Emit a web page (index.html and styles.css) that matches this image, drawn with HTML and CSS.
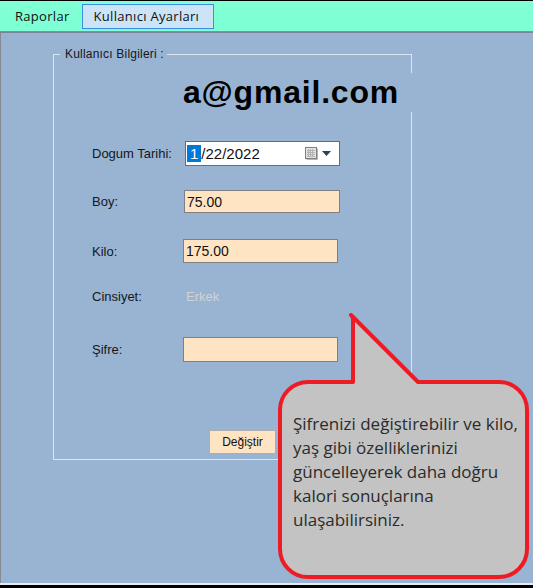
FILE: index.html
```html
<!DOCTYPE html>
<html lang="tr">
<head>
<meta charset="utf-8">
<title>Kullanıcı Ayarları</title>
<link rel="stylesheet" href="styles.css">
</head>
<body>
<div class="window">
  <div class="topline"></div>
  <nav class="menubar">
    <span class="menu-item">Raporlar</span>
    <span class="menu-item active">Kullanıcı Ayarları</span>
  </nav>
  <div class="menu-sep"></div>
  <main class="main">
    <section class="group">
      <div class="legend">Kullanıcı Bilgileri :</div>
      <div class="email">a@gmail.com</div>
      <div class="row row-date">
        <span class="lbl">Dogum Tarihi:</span>
        <div class="datepicker">
          <span class="date-text"><span class="sel">1</span>/22/2022</span>
          <svg class="cal" width="13" height="13" viewBox="0 0 13 13"><rect x="0.5" y="0.5" width="11" height="11" fill="#e4e4e4" stroke="#7e7e7e"/><path d="M2 3.5h8M2 5.5h8M2 7.5h8M2 9.5h8M3.5 2v8M5.5 2v8M7.5 2v8" stroke="#b4b4b4" stroke-width="1"/><path d="M12.5 1.5v11h-11" stroke="#b8b8b8" fill="none"/></svg>
          <svg class="arrow" width="9" height="5" viewBox="0 0 9 5"><path d="M0 0h9L4.5 5z" fill="#2e3f63"/></svg>
        </div>
      </div>
      <div class="row row-boy">
        <span class="lbl">Boy:</span>
        <input class="field" type="text" value="75.00" readonly>
      </div>
      <div class="row row-kilo">
        <span class="lbl">Kilo:</span>
        <input class="field narrow" type="text" value="175.00" readonly>
      </div>
      <div class="row row-cins">
        <span class="lbl">Cinsiyet:</span>
        <span class="value-disabled">Erkek</span>
      </div>
      <div class="row row-sifre">
        <span class="lbl">Şifre:</span>
        <input class="field narrow" type="password" value="" readonly>
      </div>
      <div class="row row-btn">
        <button class="btn" type="button">Değiştir</button>
      </div>
    </section>
  </main>
  <div class="bottom-light"></div>
  <div class="bottom-dark"></div>

  <svg class="callout-shape" width="533" height="588" viewBox="0 0 533 588">
    <path d="M353 382 V318 L351 315 L418 382 H499 A28 28 0 0 1 527 410 V549 A28 28 0 0 1 499 577 H308 A28 28 0 0 1 280 549 V410 A28 28 0 0 1 308 382 Z" fill="#c3c3c3" stroke="#ed1c24" stroke-width="4" stroke-linejoin="round"/>
  </svg>
  <p class="callout-text">Şifrenizi değiştirebilir ve kilo,<br>yaş gibi özelliklerinizi<br>güncelleyerek daha doğru<br>kalori sonuçlarına<br>ulaşabilirsiniz.</p>
</div>
</body>
</html>
```
FILE: styles.css
```css
* { box-sizing: border-box; }

body {
  margin: 0;
  font-family: "Liberation Sans", Arial, sans-serif;
  background: #98b4d2;
}

.window {
  position: relative;
  width: 533px;
  height: 588px;
  overflow: hidden;
}

.topline { height: 1px; background: #000; }

.menubar {
  height: 30px;
  background: #7fffd4;
  display: flex;
  align-items: center;
  padding-left: 3px;
  font-family: "Open Sans", "Noto Sans", sans-serif;
  font-size: 13px;
  letter-spacing: 0.3px;
  color: #111;
}

.menu-item {
  height: 25px;
  line-height: 23px;
  padding: 0 11px;
  border: 1px solid transparent;
}

.menu-item.active {
  padding-right: 14px;
  background: #cce4f7;
  border-color: #3d8ee0;
}

.menu-sep {
  height: 2px;
  border-top: 1px solid #8e8e8e;
  background: #7a8496;
}

.main {
  height: 550px;
  background: #98b4d2;
  border-left: 1px solid #868a92;
  padding: 21px 0 0 52px;
}

.group {
  width: 359px;
  height: 406px;
  border: 1px solid #dde4ec;
  display: flex;
  flex-direction: column;
  font-size: 13px;
  color: #161620;
}

.legend {
  align-self: flex-start;
  margin: -8px 0 0 6px;
  padding: 0 3px 0 5px;
  background: #98b4d2;
  line-height: 14px;
  font-size: 12px;
  letter-spacing: 0.2px;
}

.email {
  margin-top: 12px;
  margin-right: -12px;
  height: 39px;
  line-height: 39px;
  padding-left: 129px;
  background: #98b4d2;
  font-size: 32px;
  font-weight: bold;
  letter-spacing: 0.8px;
  color: #000;
}

.row {
  display: flex;
  align-items: center;
  padding-left: 38px;
}

.lbl { width: 92px; flex: none; }

.row-date { margin-top: 29px; height: 25px; }
.row-boy { margin-top: 24px; height: 23px; }
.row-kilo { margin-top: 26px; height: 24px; }
.row-cins { margin-top: 25px; height: 17px; }
.row-sifre { margin-top: 32px; height: 25px; }
.row-btn { margin-top: 68px; height: 24px; padding-left: 155px; }

.datepicker {
  margin-left: 1px;
  width: 155px;
  height: 25px;
  border: 1px solid #1a7fd9;
  background: #fff;
  display: flex;
  align-items: center;
  padding-left: 1px;
}

.date-text {
  flex: 1;
  font-size: 15px;
  color: #111;
  line-height: 18px;
}

.sel {
  background: #0078d7;
  color: #fff;
  padding: 0 3px;
}

.cal { margin-right: 4px; }
.arrow { margin-right: 8px; }

.field {
  width: 156px;
  height: 23px;
  border: 1px solid #808080;
  background: #ffe4c4;
  font-family: "Liberation Sans", Arial, sans-serif;
  font-size: 14px;
  color: #111;
  padding: 0 2px;
  margin: 0;
  outline: none;
}

.row-kilo .field { height: 24px; }
.field.narrow { width: 155px; margin-left: -1px; }
.row-sifre .field { height: 25px; }

.value-disabled {
  margin-left: 2px;
  color: #d2d2d2;
  line-height: 17px;
}

.btn {
  width: 67px;
  height: 24px;
  border: 1px solid #adadad;
  background: #ffe4c4;
  font-family: "Liberation Sans", Arial, sans-serif;
  font-size: 12px;
  color: #111;
  padding: 0;
}

.bottom-light { height: 2px; background: #e6ecf2; }
.bottom-dark { height: 3px; background: #000; }

.callout-shape {
  position: absolute;
  left: 0;
  top: 0;
}

.callout-text {
  position: absolute;
  left: 293px;
  top: 412px;
  margin: 0;
  font-family: "Open Sans", "Noto Sans", sans-serif;
  font-size: 17px;
  line-height: 24px;
  color: #2b2b2b;
  white-space: nowrap;
}
```
